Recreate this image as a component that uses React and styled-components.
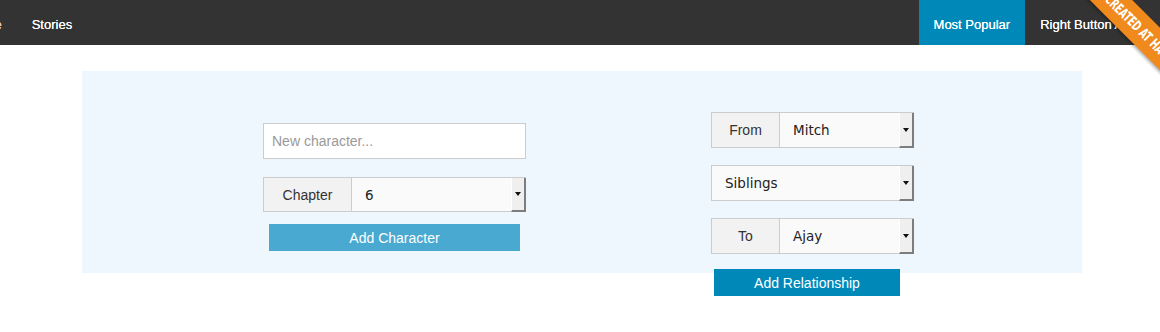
import React from "react";
import styled, { createGlobalStyle } from "styled-components";

const Global = createGlobalStyle`
  html, body { margin: 0; padding: 0; background: #fff; }
  body { font-family: "Liberation Sans", Arial, sans-serif; overflow: hidden; }
  * { box-sizing: border-box; }
`;

const Page = styled.div`
  position: relative;
  width: 1160px;
  height: 332px;
  overflow: hidden;
`;

const TopBar = styled.nav`
  display: flex;
  justify-content: space-between;
  height: 45px;
  background: #333333;
  overflow: hidden;
`;

const NavGroup = styled.ul`
  display: flex;
  margin: 0 ${(p) => p.$mr || 0}px 0 0;
  padding: 0;
  list-style: none;
  flex: none;
`;

const NavItem = styled.li`
  display: flex;
  align-items: center;
  padding: 3px 15px 0;
  height: 45px;
  font-size: 13px;
  color: ${(p) => p.$tone || "#fff"};
  white-space: nowrap;
  margin-left: ${(p) => p.$offset || 0}px;
  background: ${(p) => (p.$active ? "#0088b9" : "transparent")};
  text-shadow: 0 0 0.4px #fff;
`;

const Ribbon = styled.div`
  position: absolute;
  top: 0;
  right: 0;
  width: 100px;
  height: 100px;
  overflow: hidden;
  pointer-events: none;
`;

const RibbonBand = styled.div`
  position: absolute;
  left: 1px;
  top: 15px;
  width: 160px;
  height: 30px;
  transform: rotate(45deg);
  background: #f08a1c;
  box-shadow: 0 2px 3px rgba(0, 0, 0, 0.3);
  display: flex;
  align-items: center;
  padding-left: 33px;
  overflow: hidden;
`;

const RibbonText = styled.span`
  display: inline-block;
  color: #fff;
  font-family: "DejaVu Sans Condensed", "Liberation Sans", sans-serif;
  font-weight: bold;
  font-size: 14px;
  white-space: nowrap;
  transform: scaleX(0.7);
  transform-origin: left center;
`;

const Panel = styled.section`
  display: flex;
  align-items: flex-start;
  width: 1000px;
  height: 202px;
  margin: 26px 0 0 82px;
  padding-left: 181px;
  gap: 185px;
  background: #eef6fe;
`;

const Column = styled.div`
  display: flex;
  flex-direction: column;
  width: ${(p) => p.$width}px;
  margin-top: ${(p) => p.$top}px;
`;

const TextInput = styled.input`
  height: 36px;
  width: 100%;
  border: 1px solid #cccccc;
  background: #fff;
  padding: 0 8px;
  font-family: "Liberation Sans", Arial, sans-serif;
  font-size: 14px;
  color: #333;
  outline: none;
  &::placeholder { color: #999; }
`;

const Group = styled.div`
  display: flex;
  height: ${(p) => p.$h || 36}px;
  width: 100%;
  margin-top: ${(p) => p.$mt || 0}px;
`;

const Addon = styled.span`
  display: flex;
  align-items: center;
  justify-content: center;
  width: ${(p) => p.$w}px;
  flex: none;
  background: #f2f2f2;
  border: 1px solid #cccccc;
  border-right: none;
  font-size: 14px;
  color: #333;
`;

const Select = styled.div`
  flex: 1;
  display: flex;
  align-items: stretch;
  border: 1px solid #cccccc;
  border-right: none;
  border-bottom: none;
  background: #fafafa;
`;

const SelectValue = styled.span`
  flex: 1;
  display: flex;
  align-items: center;
  padding-left: 13px;
  font-family: "DejaVu Sans", "Liberation Sans", sans-serif;
  font-size: 13.5px;
  color: #222;
  border-bottom: 1px solid #cccccc;
`;

const ArrowButton = styled.span`
  display: flex;
  align-items: center;
  justify-content: center;
  width: 15px;
  flex: none;
  background: #efefef;
  border-left: 1px solid #fff;
  border-right: 2px solid #7d7d7d;
  border-bottom: 2px solid #7d7d7d;
  &::after {
    content: "";
    width: 0;
    height: 0;
    border-left: 3px solid transparent;
    border-right: 3px solid transparent;
    border-top: 4px solid #111;
  }
`;

const Button = styled.button`
  height: 27px;
  margin: ${(p) => p.$mt || 0}px ${(p) => p.$mx || 0}px 0 ${(p) => p.$ml ?? p.$mx ?? 0}px;
  width: ${(p) => (p.$w ? `${p.$w}px` : "auto")};
  border: none;
  background: ${(p) => p.$bg};
  color: #fff;
  font-family: "Liberation Sans", Arial, sans-serif;
  font-size: 14px;
  padding: 0;
  cursor: pointer;
`;

function Dropdown({ value }) {
  return (
    <Select>
      <SelectValue>{value}</SelectValue>
      <ArrowButton />
    </Select>
  );
}

export default function App() {
  return (
    <Page>
      <Global />
      <TopBar>
        <NavGroup>
          <NavItem $offset={-48} $tone="#e9c79a">Home</NavItem>
          <NavItem>Stories</NavItem>
        </NavGroup>
        <NavGroup $mr={-5}>
          <NavItem $active>Most Popular</NavItem>
          <NavItem>Right Button Active</NavItem>
        </NavGroup>
      </TopBar>
      <Ribbon>
        <RibbonBand>
          <RibbonText>CREATED AT HACKATHON</RibbonText>
        </RibbonBand>
      </Ribbon>
      <Panel>
        <Column $width={263} $top={52}>
          <TextInput placeholder="New character..." />
          <Group $h={35} $mt={18}>
            <Addon $w={88}>Chapter</Addon>
            <Dropdown value="6" />
          </Group>
          <Button $bg="#49a9d0" $mx={6} $mt={12}>Add Character</Button>
        </Column>
        <Column $width={203} $top={41}>
          <Group>
            <Addon $w={68}>From</Addon>
            <Dropdown value="Mitch" />
          </Group>
          <Group $mt={17}>
            <Dropdown value="Siblings" />
          </Group>
          <Group $mt={17}>
            <Addon $w={68}>To</Addon>
            <Dropdown value="Ajay" />
          </Group>
          <Button $bg="#0088b9" $w={186} $ml={3} $mx={0} $mt={15}>
            Add Relationship
          </Button>
        </Column>
      </Panel>
    </Page>
  );
}
